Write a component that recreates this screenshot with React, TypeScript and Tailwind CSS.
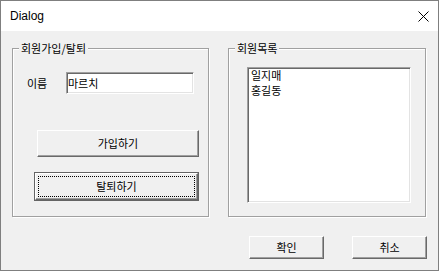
import { useState } from 'react';

const members = ['일지매', '홍길동'];

// 클래식 윈도우 버튼 (볼록)
function Button({
  label,
  className,
  isDefault,
}: {
  label: string;
  className: string;
  isDefault?: boolean;
}) {
  if (isDefault) {
    return (
      <button className={`border border-[#646464] bg-[#f0f0f0] p-0 ${className}`}>
        <div className="h-full w-full border border-t-white border-l-white border-b-[#696969] border-r-[#696969] shadow-[inset_-1px_-1px_0_#a0a0a0] p-[2px]">
          <div className="flex h-full w-full items-center justify-center border border-dotted border-black">
            {label}
          </div>
        </div>
      </button>
    );
  }
  return (
    <button
      className={`flex items-center justify-center border border-t-white border-l-white border-b-[#696969] border-r-[#696969] bg-[#f0f0f0] shadow-[inset_-1px_-1px_0_#a0a0a0] ${className}`}
    >
      {label}
    </button>
  );
}

// 에칭 그룹박스
function GroupBox({
  title,
  className,
  children,
}: {
  title: string;
  className: string;
  children: React.ReactNode;
}) {
  return (
    <div
      className={`relative border border-[#a0a0a0] shadow-[inset_1px_1px_0_#fff,1px_1px_0_#fff] ${className}`}
    >
      <span className="absolute left-[6px] top-[-8px] bg-[#f0f0f0] px-[2px] leading-[15px]">
        {title}
      </span>
      {children}
    </div>
  );
}

export default function App() {
  const [name, setName] = useState('마르치');

  return (
    <div className="h-[271px] w-[439px] overflow-hidden border border-[#7f7f7f] bg-[#f0f0f0] text-[11px] text-black font-['Noto_Sans_CJK_KR',sans-serif]">
      {/* Title bar */}
      <div className="flex h-[30px] items-center justify-between bg-white pl-[9px] pr-[9px]">
        <span className="text-[12px] font-['Liberation_Sans',sans-serif] pb-[1px]">Dialog</span>
        <svg width="11" height="11" viewBox="0 0 11 11" className="mt-[1px]">
          <path d="M0.5 0.5L10.5 10.5M10.5 0.5L0.5 10.5" stroke="#000" strokeWidth="1" />
        </svg>
      </div>

      {/* Client area */}
      <div className="flex flex-col pl-[11px] pt-[17px]">
        <div className="flex gap-[19px]">
          <GroupBox title="회원가입/탈퇴" className="h-[169px] w-[197px]">
            <div className="flex flex-col items-start pl-[14px] pt-[23px]">
              <div className="flex items-center">
                <span className="w-[39px] leading-[14px]">이름</span>
                <input
                  value={name}
                  onChange={(e) => setName(e.target.value)}
                  className="h-[22px] w-[128px] border border-t-[#a0a0a0] border-l-[#a0a0a0] border-b-white border-r-white bg-white pl-[1px] leading-[14px] shadow-[inset_1px_1px_0_#696969,inset_-1px_-1px_0_#e3e3e3] outline-none"
                />
              </div>
              <Button label="가입하기" className="ml-[10px] mt-[36px] h-[27px] w-[162px]" />
              <Button label="탈퇴하기" isDefault className="ml-[7px] mt-[15px] h-[29px] w-[165px]" />
            </div>
          </GroupBox>

          <GroupBox title="회원목록" className="h-[169px] w-[198px]">
            <div className="pl-[18px] pt-[18px]">
              <ul className="h-[136px] w-[164px] border border-t-[#a0a0a0] border-l-[#a0a0a0] border-b-white border-r-white bg-white pl-[3px] shadow-[inset_1px_1px_0_#696969,inset_-1px_-1px_0_#e3e3e3]">
                {members.map((m) => (
                  <li key={m} className="leading-[15px]">
                    {m}
                  </li>
                ))}
              </ul>
            </div>
          </GroupBox>
        </div>

        <div className="mt-[19px] flex justify-end gap-[28px] pr-[11px]">
          <Button label="확인" className="h-[23px] w-[75px]" />
          <Button label="취소" className="h-[23px] w-[75px]" />
        </div>
      </div>
    </div>
  );
}
